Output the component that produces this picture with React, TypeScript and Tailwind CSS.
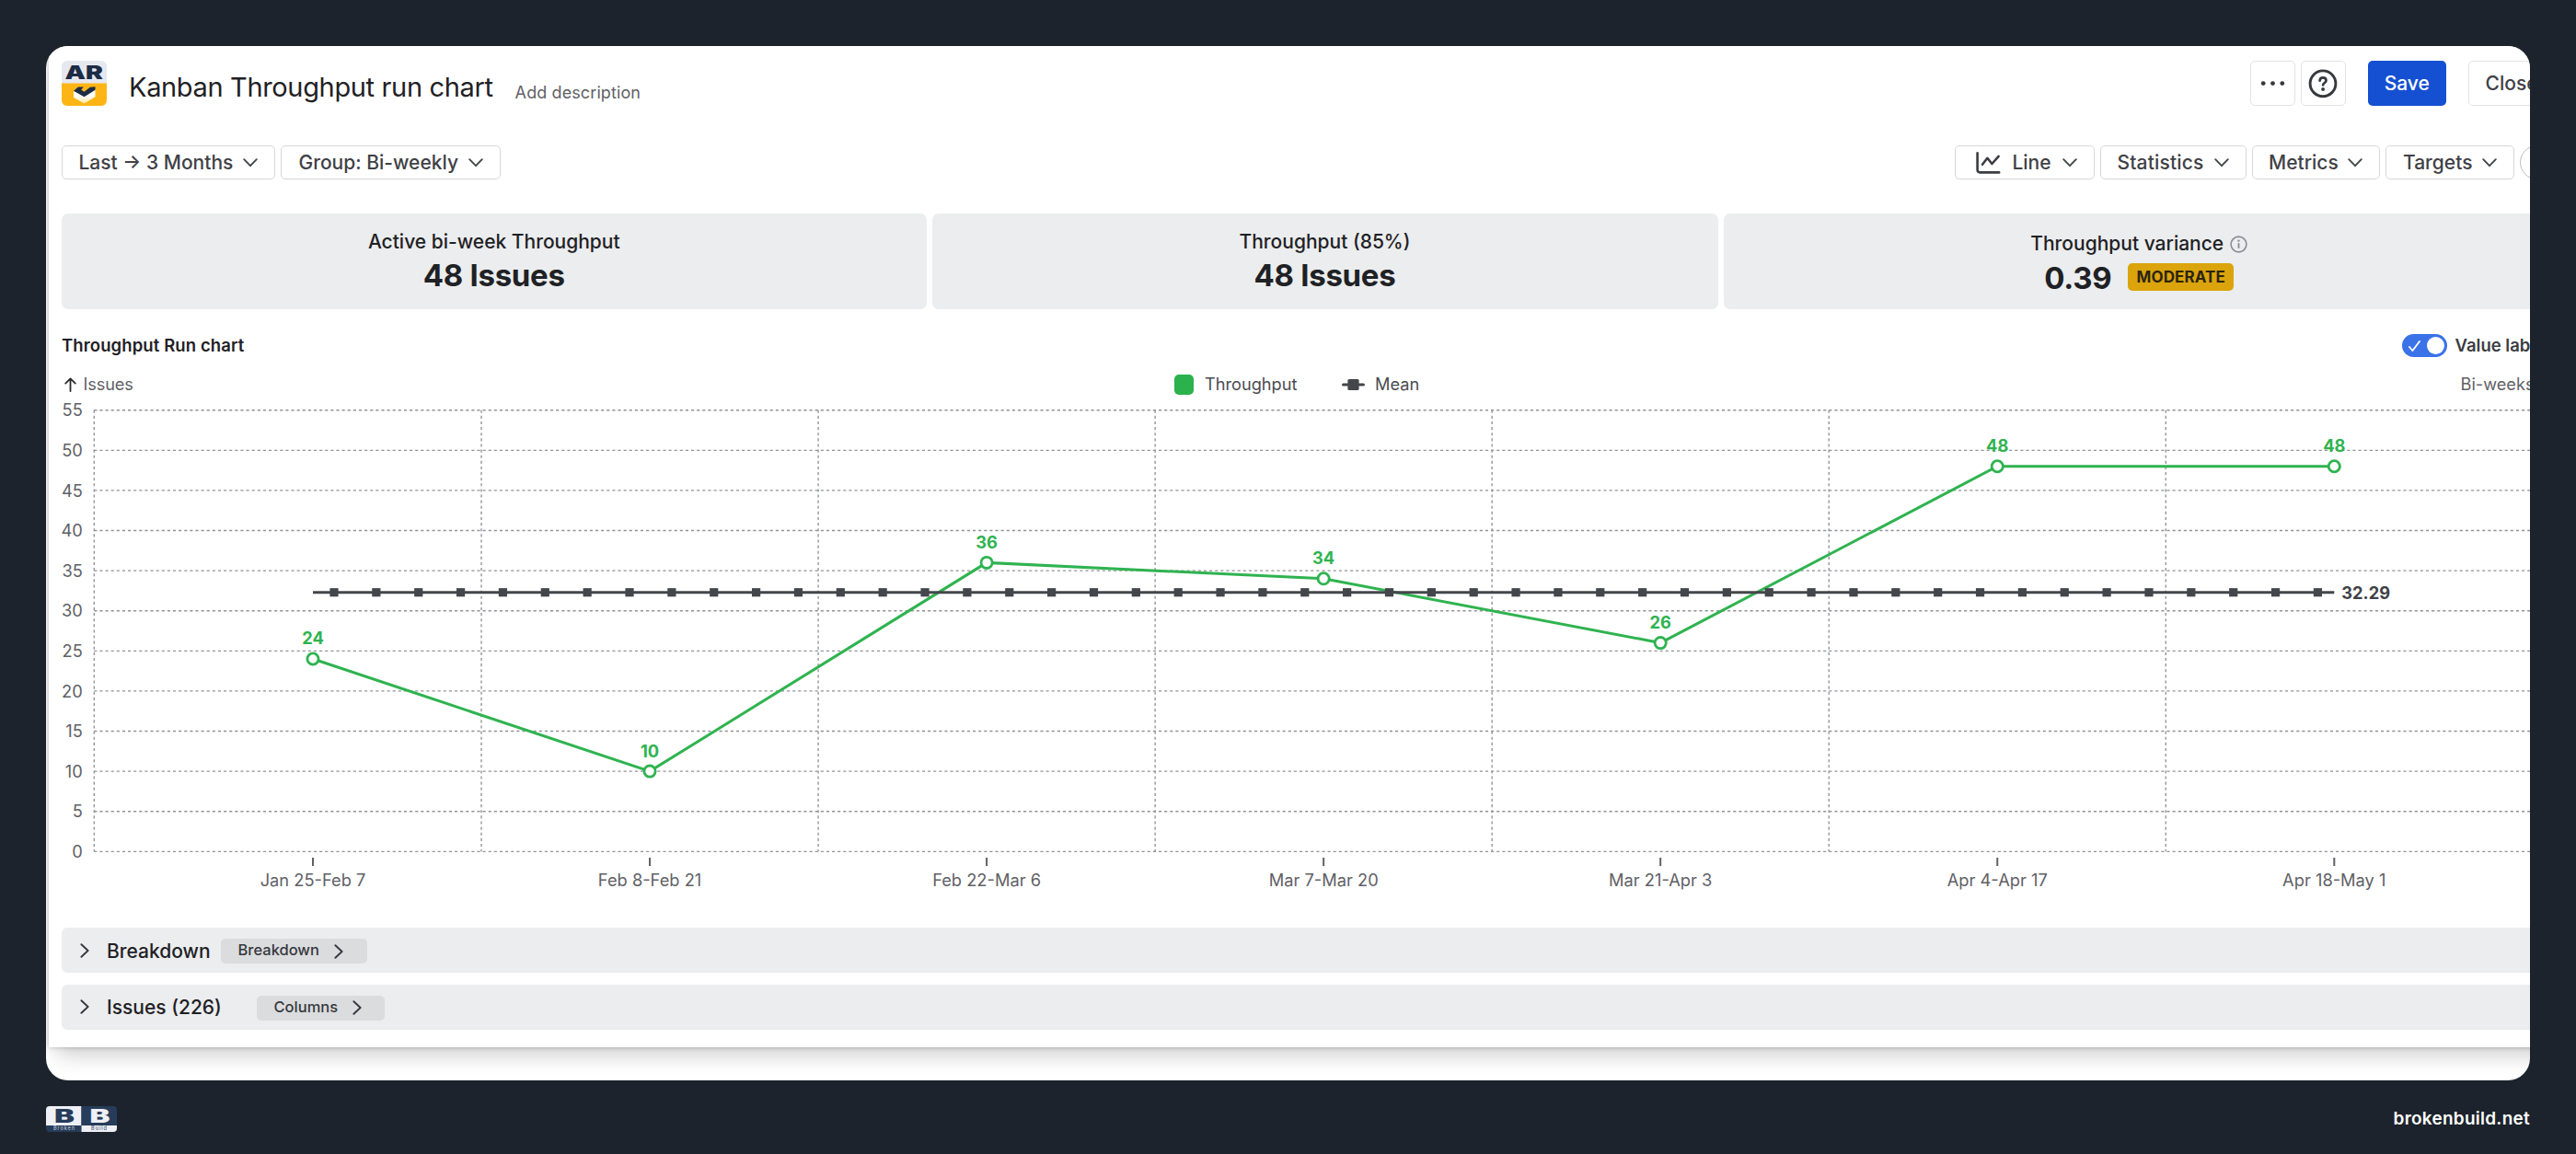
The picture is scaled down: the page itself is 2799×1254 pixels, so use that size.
import type { ReactNode } from 'react';

type Point = { label: string; value: number };

const points: Point[] = [
  { label: 'Jan 25-Feb 7', value: 24 },
  { label: 'Feb 8-Feb 21', value: 10 },
  { label: 'Feb 22-Mar 6', value: 36 },
  { label: 'Mar 7-Mar 20', value: 34 },
  { label: 'Mar 21-Apr 3', value: 26 },
  { label: 'Apr 4-Apr 17', value: 48 },
  { label: 'Apr 18-May 1', value: 48 },
];

const mean = 32.29;
const ticks = [55, 50, 45, 40, 35, 30, 25, 20, 15, 10, 5, 0];

// Plot geometry, in pixels from the chart's top left corner
const PLOT_LEFT = 35.3;
const PLOT_TOP = 15.7;
const PLOT_BOTTOM = 495.3;
const CHART_WIDTH = 2709;
const FIRST_X = 273;
const STEP = 366.05;

const xOf = (index: number) => FIRST_X + index * STEP;
const yOf = (value: number) => PLOT_BOTTOM - (value / 55) * (PLOT_BOTTOM - PLOT_TOP);

const ChevronDown = () => (
  <svg width="16" height="10" viewBox="0 0 16 10" fill="none" stroke="#44464b" strokeWidth="1.9" strokeLinecap="round" strokeLinejoin="round">
    <path d="M1.2 1.2 8 8.2l6.8-7" />
  </svg>
);

const ChevronRight = () => (
  <svg width="10" height="16" viewBox="0 0 10 16" fill="none" stroke="#36383d" strokeWidth="1.9" strokeLinecap="round" strokeLinejoin="round">
    <path d="M1.4 1.2 8.6 8l-7.2 6.8" />
  </svg>
);

const ArrowUp = () => (
  <svg width="13" height="16" viewBox="0 0 13 16" fill="none" stroke="#292a2e" strokeWidth="1.8" strokeLinecap="round" strokeLinejoin="round">
    <path d="M6.5 15V1.4M1.2 6.6l5.3-5.2 5.3 5.2" />
  </svg>
);

const LineIcon = () => (
  <svg width="27" height="24" viewBox="0 0 27 24" fill="none" stroke="#3b3d42" strokeWidth="2.6" strokeLinecap="round" strokeLinejoin="round">
    <path d="M1.6 1.4v18.2q0 2.8 2.8 2.8h20.8" />
    <path d="m7 13.8 5.4-7 5 6.2 7.2-8.2" />
  </svg>
);

const AppLogo = () => (
  <svg width="49" height="49" viewBox="0 0 49 49">
    <defs>
      <clipPath id="logo">
        <rect width="49" height="49" rx="6" />
      </clipPath>
      <linearGradient id="logo-fade" x1="0" y1="0" x2="0" y2="1">
        <stop offset="0.45" stopColor="#fff" />
        <stop offset="1" stopColor="#ffe5a3" />
      </linearGradient>
    </defs>
    <g clipPath="url(#logo)">
      <rect width="49" height="49" fill="#e6e8f0" />
      <rect y="24.5" width="49" height="25" fill="#fdb515" />
    </g>
    <text x="3.5" y="19.8" textLength="41.5" lengthAdjust="spacingAndGlyphs" fontSize="20.5" fontWeight="900" fill="#1d2b45">
      AR
    </text>
    <path d="m13 33 11.5 5L36.5 31v8.2l-12 7.2L13 40z" fill="url(#logo-fade)" />
    <path d="m13 32.8 5-4.3h5.8l-2.6 3 3.3 2.2 6.3-4.9 5.7-.6v3.6l-12 7.4z" fill="#1d2b45" />
  </svg>
);

const FooterLogo = () => (
  <svg width="77" height="28" viewBox="0 0 77 28">
    <defs>
      <clipPath id="footer-logo">
        <rect width="77" height="28" rx="4" />
      </clipPath>
    </defs>
    <g clipPath="url(#footer-logo)">
      <rect width="38.5" height="21" fill="#eef0f6" />
      <rect x="38.5" width="38.5" height="21" fill="#263c5a" />
      <rect y="21" width="38.5" height="7" fill="#263c5a" />
      <rect x="38.5" y="21" width="38.5" height="7" fill="#eef0f6" />
    </g>
    <text x="9" y="18" textLength="22" lengthAdjust="spacingAndGlyphs" fontSize="20" fontWeight="900" fill="#263c5a">B</text>
    <text x="47.5" y="18" textLength="22" lengthAdjust="spacingAndGlyphs" fontSize="20" fontWeight="900" fill="#eef0f6">B</text>
    <text x="8" y="26.4" textLength="23" fontSize="5.6" fill="#c9d0dd">Broken</text>
    <text x="49" y="26.4" textLength="17" fontSize="5.6" fill="#263c5a">Build</text>
  </svg>
);

type DropdownProps = { className: string; icon?: ReactNode; children: ReactNode };

const Dropdown = ({ className, icon, children }: DropdownProps) => (
  <button
    type="button"
    className={`flex h-[37px] shrink-0 items-center justify-between rounded-[5px] border border-[#d5d7da] bg-white pr-[18px] text-[21px] font-medium whitespace-nowrap text-[#3f4146] ${className}`}
  >
    {icon}
    <span>{children}</span>
    <ChevronDown />
  </button>
);

const Header = () => (
  <header className="flex h-[49px] items-center">
    <AppLogo />
    <h1 className="ml-[24px] pt-2 text-[29px] tracking-[-0.35px] text-[#1f2125]">Kanban Throughput run chart</h1>
    <span className="ml-[24px] pt-[20px] text-[18px] tracking-[0.1px] text-[#5f6166]">Add description</span>
    <div className="ml-auto flex text-[21px] font-medium text-[#3f4146]">
      <button type="button" className="grid h-[49px] w-[49px] place-items-center rounded-[5px] border-[1.5px] border-[#e2e3e5]">
        <svg width="27" height="6" viewBox="0 0 27 6" fill="#36383d">
          <circle cx="3.2" cy="2.6" r="2.4" />
          <circle cx="13.5" cy="2.6" r="2.4" />
          <circle cx="23.8" cy="2.6" r="2.4" />
        </svg>
      </button>
      <button type="button" className="ml-1.5 grid h-[49px] w-[49px] place-items-center rounded-[5px] border-[1.5px] border-[#e2e3e5]">
        <svg width="32" height="32" viewBox="0 0 32 32" fill="none" stroke="#36383d" strokeWidth="2.9" strokeLinecap="round">
          <circle cx="16" cy="15.8" r="13.9" />
          <path d="M12.6 12.6c.2-2.2 1.6-3.2 3.4-3.2 2 0 3.5 1.2 3.5 3.1 0 2.6-3.4 2.4-3.4 5" strokeWidth="2.7" />
          <circle cx="16.1" cy="22" r="1.9" fill="#36383d" stroke="none" />
        </svg>
      </button>
      <button type="button" className="ml-[24.5px] h-[49px] w-[84.5px] rounded-[5px] bg-[#1550d2] text-white">Save</button>
      <button type="button" className="ml-[24.5px] h-[49px] w-[94px] rounded-[5px] border-[1.5px] border-[#e2e3e5] pl-[17.5px] text-left">Close</button>
    </div>
  </header>
);

const Toolbar = () => (
  <div className="mt-[43px] flex gap-1.5 pr-[1.5px]">
    <Dropdown className="w-[232px] pl-[17.5px]">Last → 3 Months</Dropdown>
    <Dropdown className="w-[238.5px] pl-[18.5px]">Group: Bi-weekly</Dropdown>
    <Dropdown className="ml-auto w-[152px] pl-[22px]" icon={<LineIcon />}>Line</Dropdown>
    <Dropdown className="w-[158.5px] pl-[17.5px] tracking-[0.15px]">Statistics</Dropdown>
    <Dropdown className="w-[139.5px] pl-[17.5px]">Metrics</Dropdown>
    <Dropdown className="w-[139.5px] pl-[18px]">Targets</Dropdown>
    <button type="button" className="h-[37px] w-[37px] rounded-full border border-[#b9bbbf]" />
  </div>
);

const Summary = () => (
  <div className="mt-[37px] flex h-[104px] gap-1.5 text-center text-[#1f2125]">
    <section className="w-[939.5px] rounded-[7px] bg-[#ebedee] pt-[15px]">
      <h2 className="pt-px text-[21px] leading-[30px] font-medium">Active bi-week Throughput</h2>
      <p className="mt-px text-[33px] leading-[40px] font-bold tracking-[-0.3px]">48 Issues</p>
    </section>
    <section className="w-[854px] rounded-[7px] bg-[#ebedee] pt-[15px]">
      <h2 className="pt-px text-[21px] leading-[30px] font-medium">Throughput (85%)</h2>
      <p className="mt-px text-[33px] leading-[40px] font-bold tracking-[-0.3px]">48 Issues</p>
    </section>
    <section className="w-[903.5px] rounded-[7px] bg-[#ebedee] pt-[18px]">
      <h2 className="flex items-center justify-center gap-[7px] text-[21px] leading-[30px] font-medium">
        Throughput variance
        <svg width="19" height="19" viewBox="0 0 19 19" fill="none" stroke="#8b8d92" strokeWidth="1.6">
          <circle cx="9.5" cy="9.5" r="8.4" />
          <path d="M9.5 8.2v5.6" strokeWidth="1.9" />
          <circle cx="9.5" cy="5.6" r="1.2" fill="#8b8d92" stroke="none" />
        </svg>
      </h2>
      <div className="mt-0.5 flex items-center justify-center gap-[18px]">
        <span className="text-[33px] leading-[40px] font-bold tracking-[-0.3px]">0.39</span>
        <span className="mb-[2px] h-[30px] w-[115px] rounded-[5px] bg-[#dca40c] text-[17px] leading-[30px] font-bold tracking-[0.1px] text-[#2b2410]">
          MODERATE
        </span>
      </div>
    </section>
  </div>
);

const ChartHeader = () => (
  <>
    <div className="mt-[27px] flex h-[25px] items-center text-[18.5px] font-semibold">
      <h2 className="tracking-[0.1px] text-[#1f2125]">Throughput Run chart</h2>
      <div className="ml-auto flex w-[166.5px] items-center gap-[9px] whitespace-nowrap text-[#3b3d42]">
        <span className="flex h-[25px] w-[49px] shrink-0 items-center justify-between rounded-full bg-[#3a72e8] pr-[3px] pl-[7px]">
          <svg width="13" height="12" viewBox="0 0 13 12" fill="none" stroke="#fff" strokeWidth="1.9" strokeLinecap="round" strokeLinejoin="round">
            <path d="m1 7 3.4 4L12 1" />
          </svg>
          <span className="h-[19px] w-[19px] rounded-full bg-white" />
        </span>
        Value labels
      </div>
    </div>
    <div className="mt-[18px] flex h-[24px] items-center text-[18.2px] text-[#4a4c52]">
      <div className="flex w-[1208.5px] items-center gap-[8px] pl-[2.5px] text-[#5f6166]">
        <ArrowUp />
        <span className="tracking-[-0.15px]">Issues</span>
      </div>
      <span className="h-[21.5px] w-[21.5px] rounded-[5px] bg-[#2bb24c]" />
      <span className="ml-3">Throughput</span>
      <svg className="ml-[48.5px]" width="25" height="12" viewBox="0 0 25 12" fill="#44464b">
        <rect y="4.6" width="25" height="3" rx="1.5" />
        <rect x="6.4" width="12.2" height="12" rx="1.5" />
      </svg>
      <span className="ml-[11px]">Mean</span>
      <span className="ml-auto w-[102.5px] text-[#5f6166]">Bi-weeks</span>
    </div>
  </>
);

const RunChart = () => {
  const firstX = xOf(0);
  const lastX = xOf(points.length - 1);
  const meanY = yOf(mean);
  const markers = Array.from({ length: 48 }, (_, i) => firstX + 23 + i * 45.86);

  return (
    <svg width={CHART_WIDTH} height="577" viewBox={`0 0 ${CHART_WIDTH} 577`} fontSize="18.3" className="block shrink-0">
      <g stroke="#909297" strokeWidth="1.35" strokeDasharray="3.1 3.02">
        {ticks.map((tick) => (
          <line key={tick} x1={PLOT_LEFT} x2={CHART_WIDTH} y1={yOf(tick)} y2={yOf(tick)} />
        ))}
        <line x1={PLOT_LEFT} x2={PLOT_LEFT} y1={PLOT_TOP} y2={PLOT_BOTTOM} />
        {points.slice(1).map((point, i) => (
          <line key={point.label} x1={xOf(i + 0.5)} x2={xOf(i + 0.5)} y1={PLOT_TOP} y2={PLOT_BOTTOM} />
        ))}
      </g>

      <g fill="#5f6166">
        {ticks.map((tick) => (
          <text key={tick} x="22.8" y={yOf(tick) + 6.6} textAnchor="end">{tick}</text>
        ))}
        {points.map((point, i) => (
          <g key={point.label}>
            <rect x={xOf(i) - 1} y="502" width="2" height="9" />
            <text x={xOf(i)} y="533.3" textAnchor="middle">{point.label}</text>
          </g>
        ))}
      </g>

      <polyline
        points={points.map((point, i) => `${xOf(i)},${yOf(point.value)}`).join(' ')}
        fill="none"
        stroke="#2fb350"
        strokeWidth="3"
      />
      <line x1={firstX} x2={lastX} y1={meanY} y2={meanY} stroke="#44464b" strokeWidth="3" />
      {markers.map((x) => (
        <rect key={x} x={x - 4.6} y={meanY - 4.6} width="9.2" height="9.2" fill="#44464b" />
      ))}
      <text x={lastX + 8} y={meanY + 6.8} fontWeight="650" fill="#3f4146">{mean}</text>

      {points.map((point, i) => (
        <g key={point.label}>
          <circle cx={xOf(i)} cy={yOf(point.value)} r="6.1" fill="#fff" stroke="#2fb350" strokeWidth="2.8" />
          <text x={xOf(i)} y={yOf(point.value) - 15.6} textAnchor="middle" fontWeight="700" fill="#2fb350">
            {point.value}
          </text>
        </g>
      ))}
    </svg>
  );
};

type PanelProps = { title: string; action: string; className: string; pillClassName: string };

const CollapsedPanel = ({ title, action, className, pillClassName }: PanelProps) => (
  <section className={`flex h-[49px] items-center rounded-[6px] bg-[#ebedee] pl-[20px] ${className}`}>
    <ChevronRight />
    <h2 className="ml-[19px] w-[113.5px] pt-[2px] text-[21px] font-medium whitespace-nowrap text-[#1f2125]">{title}</h2>
    <button
      type="button"
      className={`mt-[2px] flex h-[27px] items-center rounded-[5px] bg-[#dbdcde] pl-[18.5px] text-[16.5px] font-medium text-[#36383d] ${pillClassName}`}
    >
      <span className="mr-[16px] -mt-[2px]">{action}</span>
      <ChevronRight />
    </button>
  </section>
);

const App = () => {
  return (
    <div className="flex h-[1254px] w-[2799px] flex-col overflow-hidden bg-[#1c232c] px-[50px] pt-[50px] font-['Inter',sans-serif]">
      <main className="h-[1124px] shrink-0 overflow-hidden rounded-[24px] bg-white">
        <div className="ml-[3px] h-[1088px] w-[2760px] bg-white pt-4 pl-[14px] shadow-[0_16px_22px_-8px_rgba(0,0,0,0.2),0_0_5px_rgba(0,0,0,0.25)]">
          <div className="w-[2709px]">
            <Header />
            <Toolbar />
            <Summary />
            <ChartHeader />
            <RunChart />
            <CollapsedPanel title="Breakdown" action="Breakdown" className="mt-px" pillClassName="ml-[10.5px] w-[159px]" />
            <CollapsedPanel title="Issues (226)" action="Columns" className="mt-[12.5px]" pillClassName="ml-[49.5px] w-[139px]" />
          </div>
        </div>
      </main>
      <footer className="mt-[28px] flex items-center justify-between">
        <FooterLogo />
        <span className="text-[19px] font-semibold tracking-[0.25px] text-white">brokenbuild.net</span>
      </footer>
    </div>
  );
};

export default App;
